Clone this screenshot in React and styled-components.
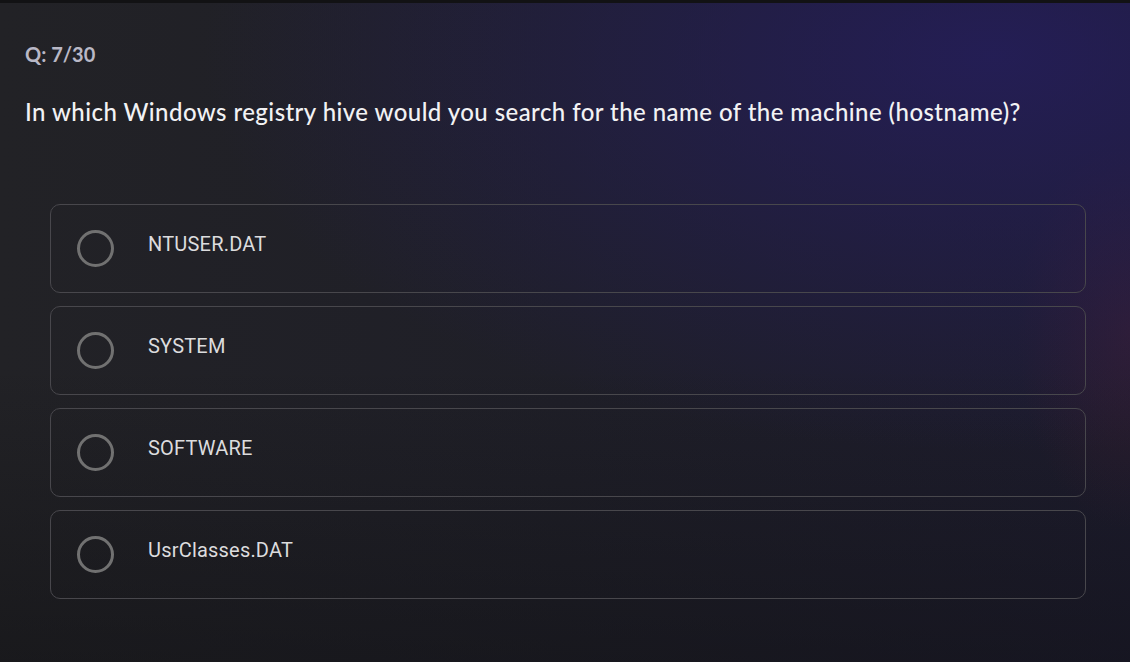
import styled, { createGlobalStyle } from "styled-components";

const GlobalStyle = createGlobalStyle`
  html, body {
    margin: 0;
    padding: 0;
    background: #1f1f23;
  }
  #root {
    min-height: 100vh;
  }
`;

const Page = styled.div`
  width: 1130px;
  height: 662px;
  box-sizing: border-box;
  border-top: 3px solid #121214;
  overflow: hidden;
  background:
    radial-gradient(ellipse 70% 60% at 88% 8%, rgba(38, 30, 98, 0.75) 0%, rgba(38, 30, 98, 0) 100%),
    radial-gradient(ellipse 10% 30% at 100% 50%, rgba(70, 30, 48, 0.45) 0%, rgba(70, 30, 48, 0) 100%),
    linear-gradient(to bottom, rgba(0, 0, 0, 0) 55%, rgba(12, 12, 14, 0.4) 100%),
    linear-gradient(to right, #222226 0%, #1f1f28 50%, #1d1c2e 100%);
  padding: 36px 0 0 25px;
  display: flex;
  flex-direction: column;
`;

const Counter = styled.div`
  font-family: "Lato", "Liberation Sans", sans-serif;
  font-weight: 700;
  font-size: 20px;
  color: #b9b8c6;
  line-height: 30px;
`;

const Question = styled.h1`
  margin: 28px 0 0;
  font-family: "Lato", "Liberation Sans", sans-serif;
  font-weight: 500;
  font-size: 24px;
  letter-spacing: 0.44px;
  line-height: 30px;
  color: #f2f2f4;
`;

const Options = styled.div`
  margin: 77px 0 0 25px;
  width: 1036px;
  display: flex;
  flex-direction: column;
  gap: 13px;
`;

const Option = styled.label`
  box-sizing: border-box;
  height: 89px;
  border: 1px solid #48474c;
  border-radius: 10px;
  display: flex;
  align-items: center;
  padding-left: 26px;
  cursor: pointer;
`;

const Radio = styled.span`
  box-sizing: border-box;
  width: 37px;
  height: 37px;
  border: 3px solid #717171;
  border-radius: 50%;
  flex-shrink: 0;
`;

const OptionText = styled.span`
  margin-left: 34px;
  font-family: "Roboto", "Liberation Sans", sans-serif;
  font-size: 20px;
  letter-spacing: 0.2px;
  color: #dcdcde;
  margin-top: -10px;
`;

const answers = ["NTUSER.DAT", "SYSTEM", "SOFTWARE", "UsrClasses.DAT"];

const App = () => {
  return (
    <>
      <GlobalStyle />
      <Page>
        <Counter>Q: 7/30</Counter>
        <Question>
          In which Windows registry hive would you search for the name of the
          machine (hostname)?
        </Question>
        <Options>
          {answers.map((answer) => (
            <Option key={answer}>
              <Radio />
              <OptionText>{answer}</OptionText>
            </Option>
          ))}
        </Options>
      </Page>
    </>
  );
};

export default App;
